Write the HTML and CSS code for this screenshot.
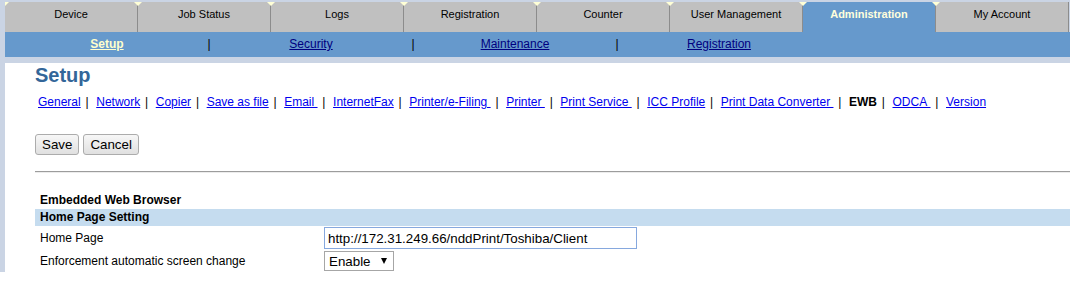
FILE: index.html
```html
<!DOCTYPE html>
<html lang="en">
<head>
    <meta charset="UTF-8">
    <meta name="viewport" content="width=device-width, initial-scale=1.0">
    <title>Setup - Embedded Web Browser</title>
    <link rel="stylesheet" href="styles.css">
</head>
<body>
    <div class="frame">
        <ul class="tabs">
            <li class="tab">Device</li>
            <li class="tab">Job Status</li>
            <li class="tab">Logs</li>
            <li class="tab">Registration</li>
            <li class="tab">Counter</li>
            <li class="tab">User Management</li>
            <li class="tab active">Administration</li>
            <li class="tab">My Account</li>
        </ul>
        <nav class="subnav">
            <a class="current" href="#">Setup</a>
            <span class="bar">|</span>
            <a href="#">Security</a>
            <span class="bar">|</span>
            <a href="#">Maintenance</a>
            <span class="bar">|</span>
            <a href="#">Registration</a>
        </nav>
        <main class="content">
            <h1>Setup</h1>
            <div class="menu">
                <a href="#">General</a><span class="sep">|</span><a href="#">Network</a><span class="sep">|</span><a href="#">Copier</a><span class="sep">|</span><a href="#">Save as file</a><span class="sep">|</span><a href="#">Email&nbsp;</a><span class="sep">|</span><a href="#">InternetFax</a><span class="sep">|</span><a href="#">Printer/e-Filing&nbsp;</a><span class="sep">|</span><a href="#">Printer&nbsp;</a><span class="sep">|</span><a href="#">Print Service&nbsp;</a><span class="sep">|</span><a href="#">ICC Profile</a><span class="sep">|</span><a href="#">Print Data Converter&nbsp;</a><span class="sep">|</span><span class="here">EWB</span><span class="sep">|</span><a href="#">ODCA&nbsp;</a><span class="sep">|</span><a href="#">Version</a>
            </div>
            <div class="actions">
                <button type="button">Save</button>
                <button type="button">Cancel</button>
            </div>
            <hr>
            <h2>Embedded Web Browser</h2>
            <div class="section-bar">Home Page Setting</div>
            <div class="field-row tall">
                <label for="homepage">Home Page</label>
                <input type="text" id="homepage" value="http://172.31.249.66/nddPrint/Toshiba/Client">
            </div>
            <div class="field-row">
                <label for="autochange">Enforcement automatic screen change</label>
                <span class="select-wrap">
                    <select id="autochange">
                        <option>Enable</option>
                        <option>Disable</option>
                    </select>
                </span>
            </div>
        </main>
    </div>
</body>
</html>
```

FILE: styles.css
```css
body {
    margin: 0;
    font-family: "Liberation Sans", Arial, sans-serif;
    font-size: 12px;
    background-color: #fff;
    color: #000;
}
.frame {
    background-color: #cad4e4;
    padding: 2px 0 0 5px;
}
.tabs {
    display: flex;
    margin: 0;
    padding: 0;
    list-style: none;
    height: 30px;
    overflow: hidden;
}
.tab {
    position: relative;
    width: 133px;
    box-sizing: border-box;
    padding-top: 6px;
    border-right: 1px solid #8c8c8c;
    background-color: #c0c0c0;
    text-align: center;
    font-size: 11px;
    line-height: 13px;
}
.tab::before {
    content: "";
    position: absolute;
    top: 0;
    left: -4px;
    border-left: 4px solid transparent;
    border-right: 4px solid transparent;
    border-top: 4px solid #ffffd6;
}
.tab.active {
    background-color: #6699cc;
    color: #ffffdd;
    font-weight: bold;
}
.subnav {
    display: flex;
    height: 25px;
    box-sizing: border-box;
    padding: 5px 0 0 51px;
    background-color: #6699cc;
    line-height: 14px;
}
.subnav > * {
    width: 102px;
    text-align: center;
}
.subnav a {
    color: #000080;
}
.subnav a.current {
    color: #ffffcc;
    font-weight: bold;
}
.content {
    background-color: #fff;
    padding-left: 30px;
}
h1 {
    margin: 6px 0 0;
    font-size: 20px;
    line-height: 24px;
    color: #336699;
}
.menu {
    margin-top: 8px;
    padding-left: 3px;
    line-height: 14px;
    white-space: nowrap;
}
.menu a {
    color: #0000ee;
}
.menu .sep {
    margin: 0 7.6px 0 4.8px;
}
.menu .here {
    font-weight: bold;
}
.actions {
    display: flex;
    gap: 4px;
    margin-top: 25px;
}
button {
    height: 21px;
    padding: 0 6px;
    font-family: "Liberation Sans", Arial, sans-serif;
    font-size: 13.33px;
    color: #000;
    border: 1px solid #acacac;
    border-radius: 3px;
    background: linear-gradient(#f7f7f7, #e0e0e0);
}
hr {
    margin: 16px 0 0;
    height: 0;
    border: 0;
    border-top: 1px solid #9c9c9c;
    border-bottom: 1px solid #ececec;
}
h2 {
    margin: 20px 0 0 5px;
    font-size: 12px;
    line-height: 14px;
}
.section-bar {
    margin-top: 2px;
    height: 17px;
    padding-left: 5px;
    background-color: #c5dcef;
    font-weight: bold;
    line-height: 17px;
}
.field-row {
    display: grid;
    grid-template-columns: 289px auto;
    align-items: center;
    height: 22px;
}
.field-row.tall {
    height: 24px;
}
.field-row label {
    padding-left: 5px;
}
.field-row input {
    width: 313px;
    height: 22px;
    box-sizing: border-box;
    padding: 0 3px;
    font-family: "Liberation Sans", Arial, sans-serif;
    font-size: 13.33px;
    border: 1px solid #86a8de;
    outline: none;
}
.select-wrap {
    position: relative;
    width: 70px;
}
.select-wrap select {
    width: 70px;
    height: 20px;
    padding: 0 0 0 4px;
    font-family: "Liberation Sans", Arial, sans-serif;
    font-size: 13.33px;
    color: #000;
    background-color: #fff;
    border: 1px solid #a6a6a6;
    border-radius: 0;
    appearance: none;
    -webkit-appearance: none;
}
.select-wrap::after {
    content: "";
    position: absolute;
    top: 7px;
    right: 7px;
    border-left: 3px solid transparent;
    border-right: 3px solid transparent;
    border-top: 6px solid #000;
    pointer-events: none;
}
```
